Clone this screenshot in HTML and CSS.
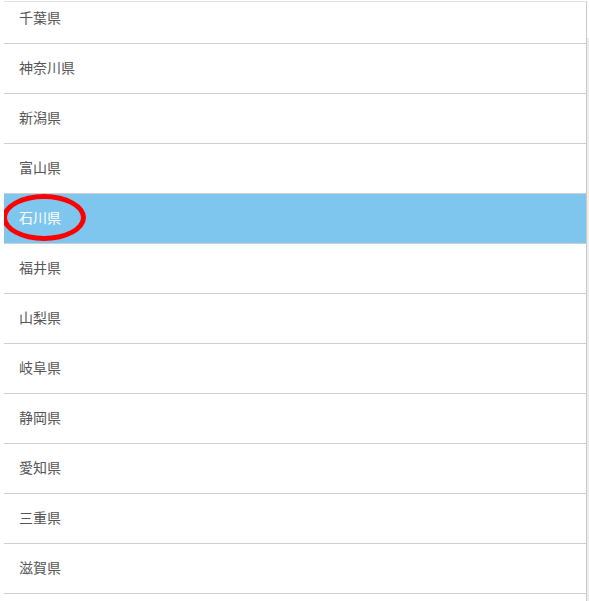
FILE: index.html
```html
<!DOCTYPE html>
<html lang="ja">
<head>
    <meta charset="UTF-8">
    <meta name="viewport" content="width=device-width,initial-scale=1">
    <title>都道府県</title>
    <link rel="stylesheet" href="styles.css">
</head>
<body>
    <div class="page">
        <div class="viewport">
            <ul class="pref-list">
                <li>千葉県</li>
                <li>神奈川県</li>
                <li>新潟県</li>
                <li>富山県</li>
                <li class="selected">
                    石川県
                    <span class="mark"></span>
                </li>
                <li>福井県</li>
                <li>山梨県</li>
                <li>岐阜県</li>
                <li>静岡県</li>
                <li>愛知県</li>
                <li>三重県</li>
                <li>滋賀県</li>
            </ul>
        </div>
        <div class="track"></div>
    </div>
</body>
</html>
```

FILE: styles.css
```css
html, body {
    margin: 0;
    padding: 0;
    height: 100%;
    background: #fff;
    font-family: "Noto Sans CJK JP", "Noto Sans", sans-serif;
}
.page {
    display: flex;
    height: 100%;
    padding-left: 4px;
    box-sizing: border-box;
}
.viewport {
    flex: 1;
    margin-top: 1px;
    border-top: 1px solid #e3e3e3;
    border-right: 1px solid #c9c9c9;
    overflow: hidden;
}
.track {
    width: 2px;
    margin-top: 38px;
    background: #ededed;
}
.pref-list {
    list-style: none;
    margin: -8px 0 0 0;
    padding: 0;
}
.pref-list li {
    position: relative;
    display: flex;
    align-items: center;
    height: 49px;
    padding: 0 0 4px 15px;
    box-sizing: border-box;
    height: 50px;
    border-bottom: 1px solid #cfcfcf;
    font-size: 14px;
    color: #555;
}
.pref-list li.selected {
    background: #7fc6ef;
    color: #fff;
}
.mark {
    position: absolute;
    left: -2px;
    top: 0;
    width: 74px;
    height: 37px;
    border: 5px solid #f00;
    border-radius: 50%;
}
```
